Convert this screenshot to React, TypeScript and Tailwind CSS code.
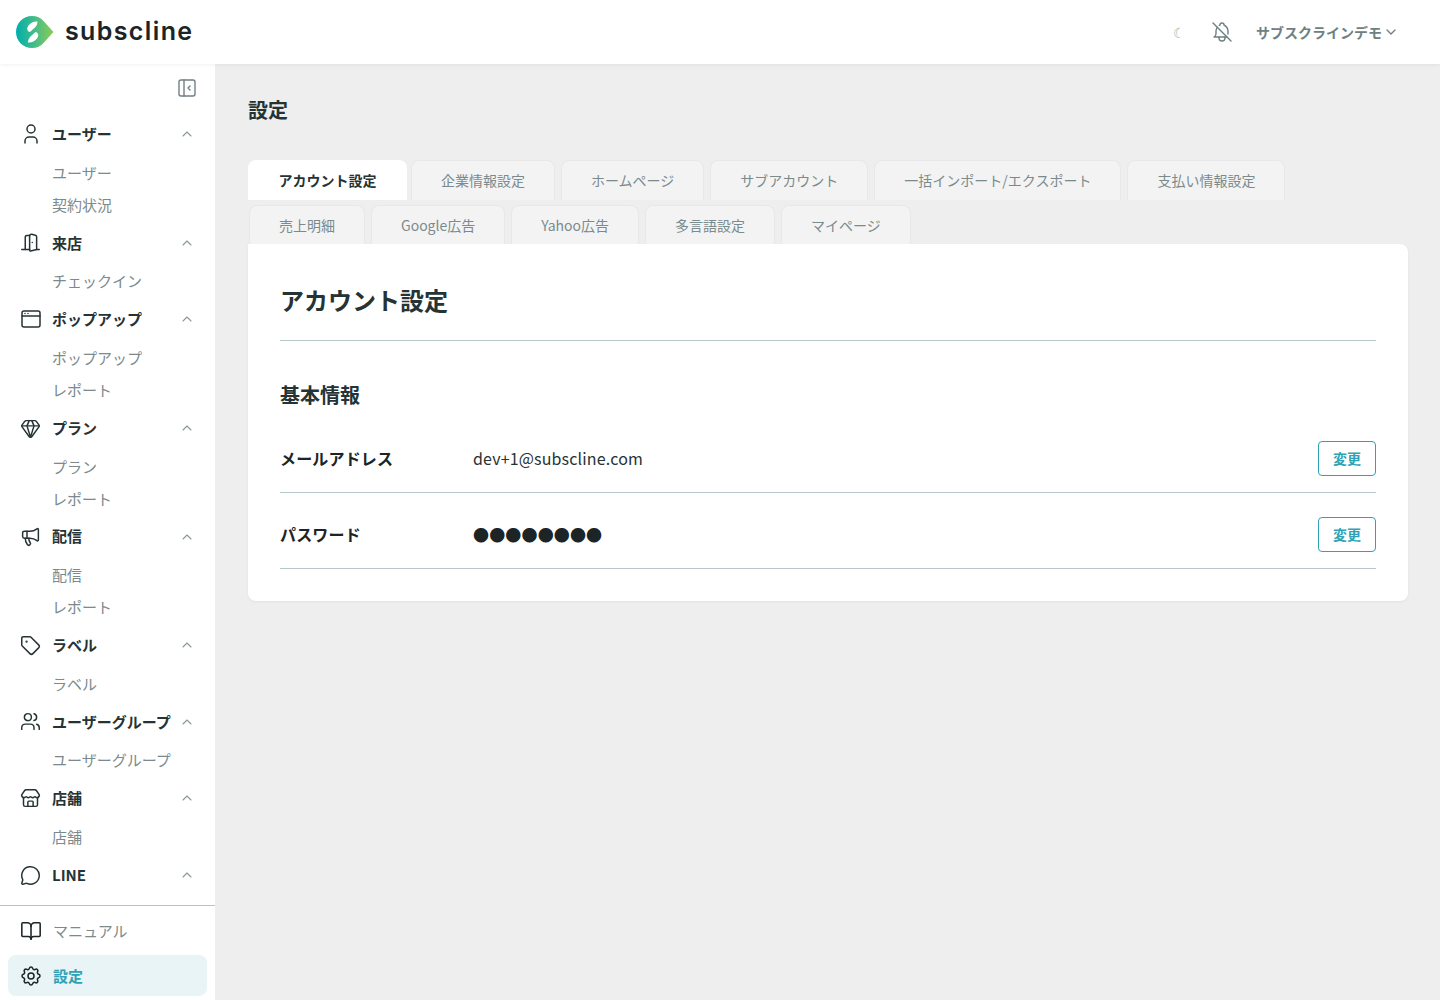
import React from 'react';
import { TbUser, TbSettings, TbBellOff, TbChevronUp, TbChevronDown, TbLayoutSidebarLeftCollapse } from 'react-icons/tb';
import { BookOpen, DoorOpen, Gem, Megaphone, MessageCircle, Store, Tag, Users } from 'lucide-react';

const lucideClass = 'size-[21px] text-[#263335]';

function PopupIcon() {
  return (
    <svg viewBox="0 0 24 24" fill="none" stroke="currentColor" strokeWidth="1.5" strokeLinecap="round" strokeLinejoin="round" className="size-6 text-[#263335]" aria-hidden="true">
      <rect x="3" y="4" width="18" height="16" rx="2" />
      <path d="M3 9h18M6 6.500v.010M9 6.500v.010" />
    </svg>
  );
}

const navGroups = [
  { label: 'ユーザー', icon: <TbUser className="size-6 text-[#263335]" strokeWidth={1.5} />, items: ['ユーザー', '契約状況'] },
  { label: '来店', icon: <DoorOpen className={lucideClass} strokeWidth={1.7} />, items: ['チェックイン'] },
  { label: 'ポップアップ', icon: <PopupIcon />, items: ['ポップアップ', 'レポート'] },
  { label: 'プラン', icon: <Gem className={lucideClass} strokeWidth={1.7} />, items: ['プラン', 'レポート'] },
  { label: '配信', icon: <Megaphone className={lucideClass} strokeWidth={1.7} />, items: ['配信', 'レポート'] },
  { label: 'ラベル', icon: <Tag className={lucideClass} strokeWidth={1.7} />, items: ['ラベル'] },
  { label: 'ユーザーグループ', icon: <Users className={lucideClass} strokeWidth={1.7} />, items: ['ユーザーグループ'] },
  { label: '店舗', icon: <Store className={lucideClass} strokeWidth={1.7} />, items: ['店舗'] },
  { label: 'LINE', icon: <MessageCircle className={lucideClass} strokeWidth={1.7} />, items: [] as string[] },
];

const tabRows = [
  ['アカウント設定', '企業情報設定', 'ホームページ', 'サブアカウント', '一括インポート/エクスポート', '支払い情報設定'],
  ['売上明細', 'Google広告', 'Yahoo広告', '多言語設定', 'マイページ'],
];

function Logo() {
  return (
    <svg width="38" height="32" viewBox="0 0 38 32" aria-hidden="true">
      <defs>
        <linearGradient id="logo-fill" x1="0" y1="0" x2="1" y2="0">
          <stop offset="0" stopColor="#00aeb0" />
          <stop offset="1" stopColor="#8ccb5a" />
        </linearGradient>
      </defs>
      <path d="M16 0C21 0 24.500 1.800 27.500 5L37.500 16L27.500 27C24.500 30.200 21 32 16 32C7 32 0 25 0 16C0 7 7 0 16 0Z" fill="url(#logo-fill)" />
      <path d="M21.500 5.500C18 5 15 6.500 12.500 9.500C10.500 12 11 15.500 14 16L19 11.500C20.500 10 21.500 8 21.500 5.500Z" fill="#fff" />
      <path d="M12 26.500C15.500 27 18.500 25.500 21 22.500C23 20 22.500 16.500 19.500 16L14.500 20.500C13 22 12 24 12 26.500Z" fill="#fff" />
    </svg>
  );
}

function Header() {
  return (
    <header className="relative z-10 flex h-16 items-center justify-between bg-white pl-4 pr-[41px] shadow-[0_1px_4px_rgba(0,0,0,0.06)]">
      <div className="flex items-center gap-[11px]">
        <Logo />
        <span className="pb-[2px] text-[25px] font-semibold leading-none tracking-[0.055em] text-[#1c2426] [font-family:Inter,sans-serif]">subscline</span>
      </div>
      <div className="flex items-center text-[#6f8082]">
        <span className="text-sm text-[#a9b3b4]">☾</span>
        <TbBellOff className="ml-6 size-6" strokeWidth={1.4} />
        <span className="ml-[22px] text-sm font-bold">サブスクラインデモ</span>
        <TbChevronDown className="ml-px size-4" strokeWidth={2} />
      </div>
    </header>
  );
}

function Sidebar() {
  return (
    <aside className="flex w-[215px] shrink-0 flex-col bg-white">
      <div className="flex justify-end pr-4 pt-3 pb-3">
        <TbLayoutSidebarLeftCollapse className="size-6 text-[#6f8082]" strokeWidth={1.4} />
      </div>
      <nav className="flex-1 pl-[18px] pr-5">
        {navGroups.map((group) => (
          <div key={group.label}>
            <div className="flex h-[44.600px] items-center">
              <div className="flex w-[25px] shrink-0 justify-center">{group.icon}</div>
              <span className="ml-[9px] flex-1 text-[15px] font-bold text-[#263335]">{group.label}</span>
              <TbChevronUp className="size-4 text-[#8b9799]" strokeWidth={1.6} />
            </div>
            {group.items.map((item) => (
              <div key={item} className="flex h-8 items-center pl-[34px] pt-px text-[15px] text-[#7b8a8c]">{item}</div>
            ))}
          </div>
        ))}
      </nav>
      <div className="mt-auto border-t border-[#b8c3c4] px-2 pt-[3px] pb-1">
        <div className="flex h-[46px] items-center pb-[2px] pl-[12px]">
          <BookOpen className="size-[22px] text-[#1c2426]" strokeWidth={1.7} />
          <span className="ml-[11px] text-[15px] text-[#7b8a8c]">マニュアル</span>
        </div>
        <div className="flex h-[41px] items-center rounded-lg bg-[#e8f4f6] pl-[11px] pt-px">
          <TbSettings className="size-6 text-[#1c2426]" strokeWidth={1.5} />
          <span className="ml-[10px] text-[15px] font-bold text-[#2fa3b5]">設定</span>
        </div>
      </div>
    </aside>
  );
}

function Tabs() {
  return (
    <div className="flex flex-col">
      {tabRows.map((row, rowIndex) => (
        <div key={rowIndex} className={rowIndex === 0 ? 'flex h-10 gap-[6px]' : 'mt-[5px] ml-px flex h-[39px] gap-[6px]'}>
          {row.map((tab) => {
            const active = tab === 'アカウント設定';
            return (
              <div
                key={tab}
                className={
                  active
                    ? '-mr-[2px] flex items-center rounded-t-lg bg-white px-[30.500px] pb-px text-sm font-bold text-[#263335]'
                    : 'flex items-center rounded-t-lg border border-b-0 border-[#e8e8e8] bg-[#f3f3f3] px-[29px] pb-px text-sm text-[#7b8a8c]'
                }
              >
                {tab}
              </div>
            );
          })}
        </div>
      ))}
    </div>
  );
}

function InfoRow({ label, value, dots }: { label: string; value: string; dots?: boolean }) {
  return (
    <div className="flex h-[76px] items-center border-b border-[#b8c7c9] pt-2">
      <div className="w-[193px] pb-px text-base font-bold tracking-[0.01em] text-[#1c2426]">{label}</div>
      <div className={dots ? 'flex-1 pb-px text-base tracking-[0.01em] text-[#1c2426]' : 'flex-1 pb-px text-base tracking-[0.01em] text-[#263335]'}>{value}</div>
      <button className="flex h-[35px] w-[58px] items-center justify-center rounded border border-[#2fa3b5] pb-px text-sm font-bold text-[#2fa3b5]">変更</button>
    </div>
  );
}

export default function App() {
  return (
    <div className="flex h-[1000px] flex-col overflow-hidden bg-[#eeeeee] [font-family:'Noto_Sans_CJK_JP','Noto_Sans',sans-serif]">
      <Header />
      <div className="flex min-h-0 flex-1">
        <Sidebar />
        <main className="flex-1 pl-[33px] pr-8 pt-[32px]">
          <h1 className="text-xl font-bold leading-7 text-[#263335]">設定</h1>
          <div className="mt-[36px]">
            <Tabs />
            <div className="rounded-b-lg rounded-tr-lg bg-white px-8 pb-8 pt-[35px] shadow-[0_1px_3px_rgba(0,0,0,0.05)]">
              <h2 className="border-b border-[#b8c7c9] pb-5 text-2xl font-bold leading-[41px] text-[#263335]">アカウント設定</h2>
              <h3 className="mt-[40px] text-xl font-bold leading-7 text-[#263335]">基本情報</h3>
              <div className="mt-2">
                <InfoRow label="メールアドレス" value="dev+1@subscline.com" />
                <InfoRow label="パスワード" value="●●●●●●●●" dots />
              </div>
            </div>
          </div>
        </main>
      </div>
    </div>
  );
}
